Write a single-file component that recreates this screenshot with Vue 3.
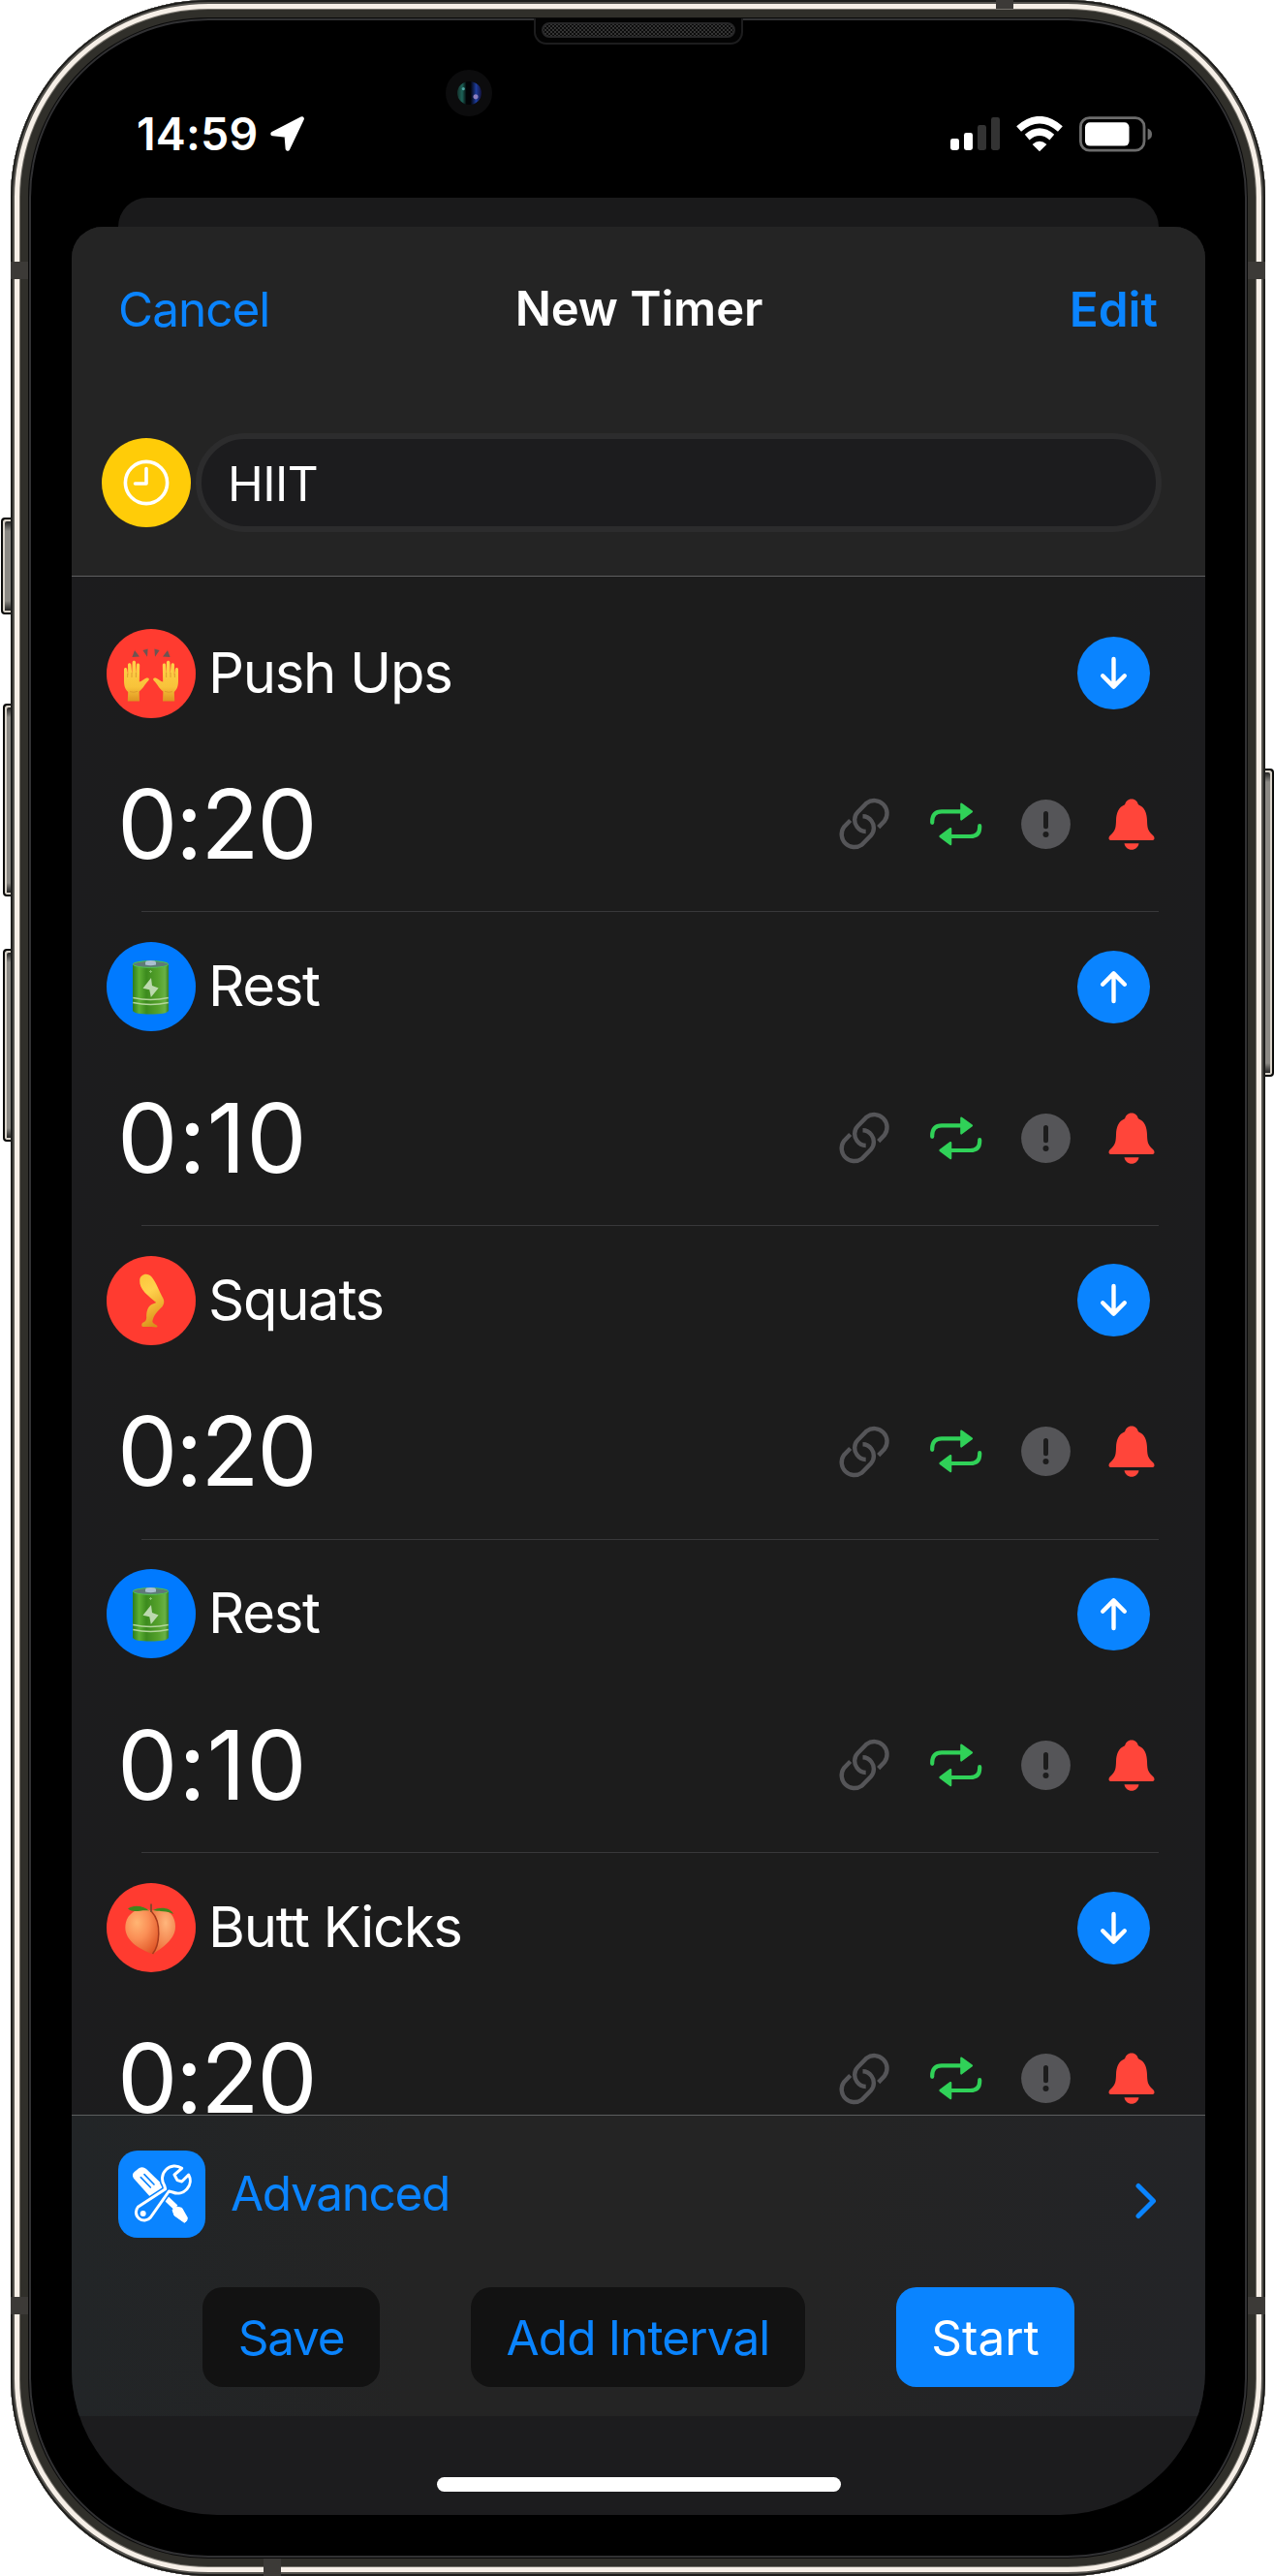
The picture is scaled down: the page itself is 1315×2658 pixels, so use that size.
<script setup>
const intervals = [
  { name: 'Push Ups', time: '0:20', icon: 'hands', dir: 'down' },
  { name: 'Rest', time: '0:10', icon: 'battery', dir: 'up' },
  { name: 'Squats', time: '0:20', icon: 'leg', dir: 'down' },
  { name: 'Rest', time: '0:10', icon: 'battery', dir: 'up' },
  { name: 'Butt Kicks', time: '0:20', icon: 'peach', dir: 'down' },
]
</script>

<template>
  <div class="stage">
    <!-- hardware buttons -->
    <i class="key key-mute"></i>
    <i class="key key-up"></i>
    <i class="key key-down"></i>
    <i class="key key-power"></i>

    <div class="phone">
      <div class="rim"></div>
      <i class="band band-l1"></i>
      <i class="band band-r1"></i>
      <i class="band band-l2"></i>
      <i class="band band-r2"></i>
      <i class="band band-t"></i>
      <i class="band band-b"></i>
      <div class="speaker"><div class="grille"></div></div>
      <div class="camera"><div class="lens"></div></div>

      <div class="screen">
        <div class="status">
          <span class="clock">14:59</span>
          <svg class="loc" width="37" height="37" viewBox="0 0 37 37">
            <path d="M33.6 2.6 18.9 33.4 17.8 19.4 3.6 18Z" fill="#fff" stroke="#fff" stroke-width="4.6" stroke-linejoin="round" />
          </svg>
          <svg class="signal" width="51" height="34" viewBox="0 0 51 34">
            <rect x="0" y="22" width="9" height="12" rx="2.4" fill="#fff" />
            <rect x="14" y="16" width="9" height="18" rx="2.4" fill="#fff" />
            <rect x="28" y="8" width="9" height="26" rx="2.4" fill="#333" />
            <rect x="42" y="0" width="9" height="34" rx="2.4" fill="#333" />
          </svg>
          <svg class="wifi" width="50" height="37" viewBox="0 0 50 37">
            <path d="M25 36.2 17.6 28.9Q25 22.6 32.4 28.9Z" fill="#fff" />
            <path d="M12.2 21.6Q25 10.8 37.8 21.6" fill="none" stroke="#fff" stroke-width="7.4" />
            <path d="M3.6 13Q25-5.6 46.4 13" fill="none" stroke="#fff" stroke-width="7.4" />
          </svg>
          <svg class="batt" width="76" height="37" viewBox="0 0 76 37">
            <rect x="1.4" y="1.7" width="65.6" height="33.4" rx="9" fill="none" stroke="#6c6c6c" stroke-width="2.8" />
            <rect x="6" y="6.2" width="45.5" height="24.4" rx="5" fill="#fff" />
            <path d="M70.6 12.4Q75 14 75 18.4T70.6 24.4Z" fill="#6c6c6c" />
          </svg>
        </div>

        <div class="rear-card"></div>

        <div class="sheet">
          <header class="top">
            <div class="nav">
              <span class="cancel">Cancel</span>
              <span class="title">New Timer</span>
              <span class="edit">Edit</span>
            </div>
            <div class="name-row">
              <div class="disc yellow">
                <svg width="92" height="92" viewBox="0 0 92 92" fill="none" stroke="#fff" stroke-width="3.6" stroke-linecap="round" stroke-linejoin="round">
                  <circle cx="46" cy="46" r="21.6" />
                  <path d="M46 31.5V47H34.5" />
                </svg>
              </div>
              <div class="field">HIIT</div>
            </div>
          </header>

          <div class="list">
            <div v-for="(it, i) in intervals" :key="i" class="row">
              <div class="row-top">
                <div class="disc" :class="it.icon === 'battery' ? 'blue' : 'red'">
                  <svg v-if="it.icon === 'hands'" width="92" height="92" viewBox="0 0 92 92">
                    <defs>
                      <linearGradient id="skin" x1="0" y1="0" x2="0" y2="1">
                        <stop offset="0" stop-color="#ffd24a" />
                        <stop offset=".65" stop-color="#f8c33a" />
                        <stop offset="1" stop-color="#dd9420" />
                      </linearGradient>
                    </defs>
                    <path d="M26.4 29 29 22 34 28.4ZM37.4 22 42.6 20.6 42 28.8ZM54.6 22 49.4 20.6 50 28.8ZM65.6 29 63 22 58 28.4Z" fill="#6d5552" />
                    <g v-for="s in [0, 1]" :key="s" :transform="s ? 'translate(92 0) scale(-1 1)' : ''">
                      <path d="M18 41.5C18 39.4 21 39.4 21.2 41.5L22.2 48 22 37C22 34.7 25.2 34.7 25.4 37L26.3 46.5 26.6 34.5C26.8 32.2 30 32.3 30.1 34.5L30.3 46.5 31 37C31.2 35 34.2 35.2 34.2 37.3L33.8 54.5C36 54.6 38.6 51.4 41.2 50.6 43.6 50 44.8 51.6 43 53.6 39.8 56.6 37 62.6 33.6 64.6L34 74.6H21.8L22.2 65C18.8 62 18 58 18 53Z" fill="url(#skin)" />
                      <path d="M21.6 46V50M26 45V50M30.4 45V50M24 64.6Q28 66 32 64.4" stroke="#d9932b" stroke-width=".8" fill="none" />
                    </g>
                  </svg>
                  <svg v-else-if="it.icon === 'battery'" width="92" height="92" viewBox="0 0 92 92">
                    <defs>
                      <linearGradient id="cell" x1="0" x2="1">
                        <stop offset="0" stop-color="#2c7d1e" />
                        <stop offset=".18" stop-color="#5eb034" />
                        <stop offset=".38" stop-color="#3c8b1e" />
                        <stop offset=".7" stop-color="#55a12b" />
                        <stop offset=".9" stop-color="#68b145" />
                        <stop offset="1" stop-color="#347e26" />
                      </linearGradient>
                    </defs>
                    <path d="M27 23V71Q29 74.6 45.5 74.6T64 71V23Z" fill="url(#cell)" />
                    <ellipse cx="45.5" cy="23" rx="18.2" ry="3.4" fill="#5e7a78" stroke="#4fc54e" stroke-width="1" />
                    <path d="M40 21.4Q40 19 45.5 19T51 21.4V23.4Q45.5 25 40 23.4Z" fill="#a9bfd0" />
                    <path d="M46 37 37.5 47.8 44.3 49.3 45.8 57 53.6 47.4 47 45Z" fill="#bcd9ae" />
                    <path d="M45.5 29V32M44 30.5H47" stroke="#8cc873" stroke-width=".9" />
                    <path d="M27.3 57.5Q45.5 61.5 63.7 57.5M27.3 62.5Q45.5 66.5 63.7 62.5" stroke="#b2d59b" stroke-width="1.7" fill="none" />
                  </svg>
                  <svg v-else-if="it.icon === 'leg'" width="92" height="92" viewBox="0 0 92 92">
                    <defs>
                      <linearGradient id="leg" x1=".2" y1="0" x2=".5" y2="1">
                        <stop offset="0" stop-color="#fbc63c" />
                        <stop offset=".35" stop-color="#ffd24d" />
                        <stop offset=".7" stop-color="#eeb030" />
                        <stop offset="1" stop-color="#d88f1c" />
                      </linearGradient>
                    </defs>
                    <path d="M34.2 25C34.5 19 42 16.5 46.5 21.5 51 27 54.5 36.5 58.3 43.5 60 46.5 59.3 50 57.5 52.2 52.5 57 48.5 61 47.3 67.5 47.5 70 52.5 71 52.5 72.7 52.5 73.7 50 73.6 46.5 73H37.5C36 72.8 35.8 70 37.4 68.8 40.8 67.5 41 65.5 41.2 63.5 41 57.5 42.3 52.5 46.5 50 48 49.1 50 48.8 51.2 48 43.5 41.5 33.5 34.5 34.2 25Z" fill="url(#leg)" />
                  </svg>
                  <svg v-else width="92" height="92" viewBox="0 0 92 92">
                    <defs>
                      <radialGradient id="peach" cx=".35" cy=".3" r=".8">
                        <stop offset="0" stop-color="#ffb573" />
                        <stop offset=".45" stop-color="#fb8f56" />
                        <stop offset="1" stop-color="#df5526" />
                      </radialGradient>
                      <radialGradient id="peach2" cx=".6" cy=".3" r=".7">
                        <stop offset="0" stop-color="#ffb67c" />
                        <stop offset="1" stop-color="#ee6f3b" />
                      </radialGradient>
                    </defs>
                    <path d="M46 29C50 26.5 70.5 24 71 45 71.3 58 56 68 47.5 73.3Z" fill="url(#peach2)" />
                    <path d="M46 29C38 23.5 19.5 28 19.3 46 19.5 61 36 69 47.5 73.3 55 66 57.5 40 46 29Z" fill="url(#peach)" />
                    <path d="M46.5 29.5C57.5 41 54.5 65 47.5 73" fill="none" stroke="#a83a1c" stroke-width="1.5" />
                    <path d="M22 26.5C28 22 38 23.5 44 28.5 36 27 28 31.5 22 26.5ZM48 28C55 24 66 25 69 32 62 28 55 30 48 28Z" fill="#3f861c" />
                    <path d="M46 30V21.5" stroke="#704a2a" stroke-width="1.6" />
                  </svg>
                </div>
                <span class="name">{{ it.name }}</span>
                <div class="arrow">
                  <svg width="75" height="75" viewBox="0 0 75 75" :class="{ flip: it.dir === 'up' }">
                    <path d="M37.5 23V51.5M26.2 40.3 37.5 51.6 48.8 40.3" fill="none" stroke="#fff" stroke-width="4.4" stroke-linecap="round" stroke-linejoin="round" />
                  </svg>
                </div>
              </div>
              <div class="row-bottom">
                <span class="time" :class="{ short: it.time === '0:10' }">{{ it.time }}</span>
                <svg class="ic-link" width="54" height="54" viewBox="0 0 54 54" fill="none" stroke="#555558" stroke-width="4.4">
                  <path d="M12.7 23.5 6 30.4A13.2 13.2 0 0 0 24.4 48.7L34 39C38 34.5 37.5 28 34.5 24 32 20.5 28.5 19.2 25.5 19.2" />
                  <path d="M41.7 30.6 47.8 24.3A13.2 13.2 0 0 0 29.4 5.7L20.3 15C16 19.5 16.5 26 19.5 30 22 33.5 25 35 28.7 35" />
                </svg>
                <svg class="ic-repeat" width="54" height="45" viewBox="0 0 54 45">
                  <path d="M2.2 20.8V19.5Q2.2 9.3 12 9.3H33M51.2 24.2V25.5Q51.2 35 41.5 35H20" fill="none" stroke="#30d158" stroke-width="4.2" stroke-linecap="round" />
                  <path d="M32.3 1.6 43 9.3 32.3 17.5ZM21.2 27 10.5 35 21.2 43Z" fill="#30d158" stroke="#30d158" stroke-width="2.2" stroke-linejoin="round" />
                </svg>
                <svg class="ic-alert" width="51" height="51" viewBox="0 0 51 51">
                  <circle cx="25.5" cy="25.5" r="25.4" fill="#555558" />
                  <path d="M25.5 14.5V27.7" stroke="#1c1c1c" stroke-width="5" stroke-linecap="round" />
                  <circle cx="25.5" cy="36" r="3" fill="#1c1c1c" />
                </svg>
                <svg class="ic-bell" width="48" height="53" viewBox="0 0 48 53" fill="#ff453a">
                  <path d="M24 .5C28 .5 30 3.2 31 6.3 37.5 9 39.8 15 40 22.5 40.2 29 40.5 32.5 44.5 36.5 46.5 38.5 47.5 39.3 47.5 41 47.5 42.5 46.5 43 45 43H3C1.5 43 .5 42.5 .5 41 .5 39.3 1.5 38.5 3.5 36.5 7.5 32.5 7.8 29 8 22.5 8.2 15 10.5 9 17 6.3 18 3.2 20 .5 24 .5Z" />
                  <path d="M16.5 46.2H31.5C30.8 50.3 27.8 52.7 24 52.7S17.2 50.3 16.5 46.2Z" />
                </svg>
              </div>
            </div>
          </div>

          <footer class="bottom">
            <div class="adv-row">
              <svg class="tools" width="90" height="90" viewBox="12 12 270 270">
                <rect x="12" y="12" width="270" height="270" rx="60" fill="#0a84ff" />
                <path d="M60 98Q52 86 63 77L76 67Q88 60 99 69L158 126 117 162Z" fill="#fff" />
                <path d="M82 95 112 126M93 86 123 117" stroke="#0a84ff" stroke-width="5" stroke-linecap="round" />
                <path d="M148 148 190 188" stroke="#fff" stroke-width="18" />
                <path d="M180 196 192 186 209 190 226 220Q227 230 217 235L186 213Z" fill="#fff" stroke="#fff" stroke-width="3" stroke-linejoin="round" />
                <path d="M209 67A38.5 38.5 0 0 0 155 120L158 131 73 187A25 25 0 1 0 112 219L169 138 181 141A38.5 38.5 0 0 0 230 87L209 108 195 104 186 87Z" fill="#0a84ff" stroke="#0a84ff" stroke-width="18" stroke-linejoin="round" />
                <path d="M209 67A38.5 38.5 0 0 0 155 120L158 131 73 187A25 25 0 1 0 112 219L169 138 181 141A38.5 38.5 0 0 0 230 87L209 108 195 104 186 87Z" fill="#0a84ff" stroke="#fff" stroke-width="9" stroke-linejoin="round" />
                <circle cx="89" cy="207" r="9" fill="#fff" />
              </svg>
              <span class="adv">Advanced</span>
              <svg class="chev" width="22" height="38" viewBox="0 0 22 38">
                <path d="M3 3.5 18.5 19 3 34.5" fill="none" stroke="#0a84ff" stroke-width="5" stroke-linecap="round" stroke-linejoin="round" />
              </svg>
            </div>
            <div class="actions">
              <div class="btn save"><span>Save</span></div>
              <div class="btn add"><span>Add Interval</span></div>
              <div class="btn start"><span>Start</span></div>
            </div>
          </footer>
          <div class="home"><i></i></div>
        </div>
      </div>
    </div>
  </div>
</template>

<style>
html,
body {
  margin: 0;
  background: #fff;
}
</style>

<style scoped>
.stage {
  position: relative;
  width: 1315px;
  height: 2658px;
  overflow: hidden;
  background: #fff;
  color: #fff;
  font-family: Inter, "Liberation Sans", sans-serif;
  font-size: 49.5px;
  line-height: 60px;
  white-space: nowrap;
}
.phone {
  position: relative;
  box-sizing: border-box;
  width: 1295px;
  height: 2658px;
  margin-left: 11px;
  padding: 63px 62px 63px 63px;
  border-radius: 204px;
  background: #000;
}
.rim {
  position: absolute;
  inset: 0;
  border-radius: 204px;
  box-shadow:
    inset 0 0 0 2px #1d1d1b,
    inset 0 0 0 4px #55534e,
    inset 0 0 0 9px #f6efe7,
    inset 0 0 0 10px #77746d,
    inset 0 0 0 18px #302f2a,
    inset 0 0 0 19px #0a0a0a,
    inset 0 0 0 21px #313133;
}
.key {
  position: absolute;
  box-sizing: border-box;
  border: 2px solid #0b0b0a;
  border-radius: 4px;
  background: linear-gradient(#111 0, #8b8984 12px, #8b8984 calc(100% - 12px), #111 100%);
  box-shadow: inset 2px 2px 0 #d8d2c8, inset 0 -2px 0 #d8d2c8;
}
.key-mute { left: 1px; top: 534px; width: 16px; height: 100px; }
.key-up { left: 3px; top: 726px; width: 16px; height: 199px; }
.key-down { left: 3px; top: 979px; width: 16px; height: 199px; }
.key-power {
  right: 0;
  top: 793px;
  width: 16px;
  height: 318px;
  box-shadow: inset -2px 2px 0 #d8d2c8, inset 0 -2px 0 #d8d2c8;
}
.band { position: absolute; background: #3c3a37; }
.band-l1, .band-r1, .band-l2, .band-r2 { width: 18px; height: 18px; }
.band-l1, .band-r1 { top: 270px; }
.band-l2, .band-r2 { top: 2370px; }
.band-l1, .band-l2 { left: 0; }
.band-r1, .band-r2 { right: 0; }
.band-t { left: 1017px; top: 0; width: 18px; height: 9px; }
.band-b { left: 261px; bottom: 0; width: 18px; height: 18px; }
.speaker {
  position: absolute;
  left: 540px;
  top: 19px;
  box-sizing: border-box;
  width: 216px;
  height: 27px;
  padding: 4px 6px;
  border: 2px solid #1d1d1e;
  border-top: 0;
  border-radius: 0 0 13px 13px;
  background: #030303;
}
.grille {
  height: 12px;
  border: 2px solid #262627;
  border-radius: 9px;
  background-color: #0c0c0c;
  background-image: radial-gradient(#343434 1px, transparent 1.3px), radial-gradient(#343434 1px, transparent 1.3px);
  background-size: 4px 4px;
  background-position: 0 0, 2px 2px;
}
.camera {
  position: absolute;
  left: 449px;
  top: 72px;
  display: grid;
  place-items: center;
  width: 48px;
  height: 48px;
  border-radius: 50%;
  background: #0c0c0d;
}
.lens {
  width: 25px;
  height: 24px;
  border-radius: 50%;
  background:
    radial-gradient(circle at 76% 66%, #8d7fc0 0 2px, transparent 3px),
    radial-gradient(circle at 25% 32%, #4fa7a4 0 1px, transparent 2px),
    linear-gradient(90deg, #15312c 0, #1d6358 20%, #020306 38%, #020306 55%, #1d3c9c 78%, #14133f 100%);
}
.screen {
  display: flex;
  flex-direction: column;
  height: 2532px;
  border-radius: 0 0 150px 150px;
  overflow: hidden;
}
.status {
  display: flex;
  flex: none;
  align-items: center;
  box-sizing: border-box;
  height: 141px;
  padding: 9px 54px 0 67px;
}
.clock { width: 137px; font-size: 46.5px; font-weight: 600; letter-spacing: 0.2px; }
.signal { margin-left: auto; }
.wifi { margin: 0 16px 0 16px; }
.rear-card {
  flex: none;
  height: 30px;
  margin: 0 48px;
  border-radius: 30px 30px 0 0;
  background: #1a1a1b;
}
.sheet {
  flex: 1;
  display: flex;
  flex-direction: column;
  border-radius: 32px 32px 0 0;
  overflow: hidden;
  background: #1c1c1e;
}
.top {
  flex: none;
  box-sizing: border-box;
  height: 361px;
  border-bottom: 1px solid #5e5e60;
  background: #242424;
}
.nav {
  display: grid;
  grid-template-columns: 1fr auto 1fr;
  align-items: center;
  height: 170px;
  padding: 0 49px 0 48px;
}
.cancel, .edit, .adv { color: #0a84ff; }
.cancel { letter-spacing: -1px; }
.title { font-weight: 600; font-size: 49px; letter-spacing: -0.1px; margin: -1px 0 0 2px; }
.edit { justify-self: end; font-weight: 600; }
.name-row {
  display: flex;
  align-items: center;
  padding: 43px 45px 0 31px;
}
.disc {
  flex: none;
  width: 92px;
  height: 92px;
  border-radius: 50%;
}
.disc svg, .arrow svg { display: block; }
.yellow { background: #ffcc08; }
.red { background: #ff3b30; }
.blue { background: #007aff; }
.field {
  flex: 1;
  box-sizing: border-box;
  height: 102px;
  margin-left: 5px;
  padding: 16px 0 0 27px;
  border: 6px solid #2c2c2d;
  border-radius: 51px;
  background: #1c1c1e;
  letter-spacing: -0.5px;
}
.list {
  flex: none;
  box-sizing: border-box;
  height: 1587px;
  padding: 22.9px 48px 0 36px;
  overflow: hidden;
  background: linear-gradient(90deg, #1c1c1e, #1c1c1c 110px, #1c1c1c 1060px, #1c1c1e);
}
.row { height: 323.6px; }
.row-top { display: flex; align-items: center; height: 153.5px; }
.name { font-size: 58px; line-height: 72px; margin: -2px 0 0 13px; letter-spacing: -1.3px; }
.arrow {
  width: 75px;
  height: 75px;
  margin: 0 9px 0 auto;
  border-radius: 50%;
  background: #0a84ff;
}
.flip { transform: rotate(180deg); }
.row-bottom {
  display: flex;
  align-items: center;
  box-sizing: border-box;
  height: 170.1px;
  padding: 0 4px 12px 11px;
  position: relative;
}
.row-bottom::after {
  content: "";
  position: absolute;
  left: 36px;
  right: 0;
  bottom: 0;
  height: 1px;
  background: #38383a;
}
.time { font-size: 99px; line-height: 120px; margin: -1px auto 0 0; letter-spacing: -2.4px; }
.time.short { letter-spacing: 0.7px; }
.ic-link { margin-right: 41px; }
.ic-repeat { margin-right: 40px; }
.ic-alert { margin-right: 39px; }
.bottom {
  flex: none;
  box-sizing: border-box;
  height: 311px;
  border-top: 1px solid #5c5e5f;
  background: linear-gradient(90deg, #222527, #242424 30%, #242424 65%, #232427);
}
.adv-row {
  display: flex;
  align-items: center;
  height: 90px;
  padding: 36px 50px 0 48px;
}
.adv { margin: -2px 0 0 26px; letter-spacing: -1.35px; }
.chev { margin: 14px 0 0 auto; }
.actions { display: flex; padding: 51px 135px 0; justify-content: space-between; }
.btn {
  display: flex;
  align-items: center;
  justify-content: center;
  height: 103px;
  border-radius: 21px;
  background: #121212;
  color: #0a84ff;
}
.save { width: 183px; letter-spacing: -1.2px; }
.add { width: 345px; letter-spacing: -0.9px; }
.start { width: 184px; background: #0a84ff; color: #fff; }
.home { display: flex; justify-content: center; padding-top: 63px; }
.home i { width: 417px; height: 15px; border-radius: 8px; background: #fff; }
</style>
